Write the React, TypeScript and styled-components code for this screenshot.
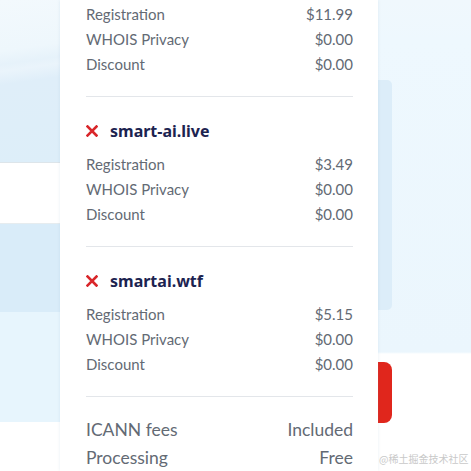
import React from 'react';
import styled, { createGlobalStyle } from 'styled-components';

const GlobalStyle = createGlobalStyle`
  html, body {
    margin: 0;
    padding: 0;
    width: 471px;
    height: 471px;
    overflow: hidden;
    background: #ffffff;
  }
  * {
    box-sizing: border-box;
  }
`;

interface Fee {
  label: string;
  price: string;
}

interface Domain {
  name: string;
  fees: Fee[];
}

const domains: Domain[] = [
  {
    name: 'smart-ai.live',
    fees: [
      { label: 'Registration', price: '$3.49' },
      { label: 'WHOIS Privacy', price: '$0.00' },
      { label: 'Discount', price: '$0.00' },
    ],
  },
  {
    name: 'smartai.wtf',
    fees: [
      { label: 'Registration', price: '$5.15' },
      { label: 'WHOIS Privacy', price: '$0.00' },
      { label: 'Discount', price: '$0.00' },
    ],
  },
];

const firstFees: Fee[] = [
  { label: 'Registration', price: '$11.99' },
  { label: 'WHOIS Privacy', price: '$0.00' },
  { label: 'Discount', price: '$0.00' },
];

const Page = styled.div`
  position: relative;
  display: flex;
  width: 471px;
  height: 471px;
  font-family: Lato, 'Noto Sans', sans-serif;
`;

const LeftStrip = styled.div`
  width: 60px;
  display: flex;
  flex-direction: column;
`;

const SkyBlock = styled.div`
  height: 162px;
  background: linear-gradient(
    172deg,
    #f3f9fd 0%,
    #eef7fc 30%,
    #e6f2fa 38%,
    #eaf4fb 42%,
    #dfeef9 50%,
    #ddeef9 100%
  );
`;

const InputBlock = styled.div`
  height: 62px;
  background: #ffffff;
  border-top: 1px solid #dde5ea;
  border-bottom: 1px solid #e6ecef;
`;

const BlueBlock = styled.div<{ $h: number; $bg: string }>`
  height: ${p => p.$h}px;
  background: ${p => p.$bg};
`;

const RightStrip = styled.div`
  flex: 1;
  display: flex;
  flex-direction: column;
  background: linear-gradient(
    180deg,
    #f0f8fd 0px,
    #eef8fe 40px,
    #ebf6fd 352px,
    #ffffff 354px
  );
`;

const Spacer = styled.div<{ $h: number }>`
  height: ${p => p.$h}px;
`;

const SideCard = styled.div`
  width: 14px;
  height: 230px;
  background: #dcedf9;
  border-radius: 0 5px 5px 0;
`;

const RedButton = styled.div`
  width: 14px;
  height: 61px;
  background: #e0261c;
  border-radius: 0 8px 8px 0;
`;

const Panel = styled.div`
  width: 318px;
  background: #ffffff;
  padding: 2px 25px 0 26px;
  box-shadow: 0 0 3px rgba(120, 160, 190, 0.18);
  z-index: 1;
`;

const Row = styled.div`
  display: flex;
  justify-content: space-between;
  height: 25px;
  line-height: 25px;
  font-size: 15px;
  color: #636a74;
`;

const Divider = styled.div`
  height: 1px;
  background: #e3e6ea;
  margin-top: 19px;
`;

const Title = styled.div`
  display: flex;
  align-items: center;
  gap: 12px;
  height: 24px;
  margin: 22px 0 9px;
  font-family: 'Noto Sans', sans-serif;
  font-size: 16px;
  font-weight: 700;
  color: #1c2350;
`;

const TotalRow = styled.div<{ $first?: boolean }>`
  display: flex;
  justify-content: space-between;
  height: 28px;
  line-height: 28px;
  font-size: 17.5px;
  color: #636a74;
  margin-top: ${p => (p.$first ? '19px' : '0')};
`;

const Watermark = styled.div`
  position: absolute;
  left: 379px;
  top: 451px;
  font-size: 10px;
  color: #c9c9c9;
  font-family: 'Noto Sans CJK SC', sans-serif;
  white-space: nowrap;
  z-index: 2;
`;

const Cross = () => (
  <svg width="12" height="12" viewBox="0 0 12 12">
    <path
      d="M1.5 1.5 L10.5 10.5 M10.5 1.5 L1.5 10.5"
      stroke="#d9262a"
      strokeWidth="2.6"
      strokeLinecap="square"
    />
  </svg>
);

const FeeRows = ({ fees }: { fees: Fee[] }) => (
  <>
    {fees.map(f => (
      <Row key={f.label}>
        <span>{f.label}</span>
        <span>{f.price}</span>
      </Row>
    ))}
  </>
);

export default function App() {
  return (
    <Page>
      <GlobalStyle />
      <LeftStrip>
        <SkyBlock />
        <InputBlock />
        <BlueBlock $h={88} $bg="#d9ecf9" />
        <BlueBlock $h={110} $bg="#e7f5fd" />
      </LeftStrip>

      <Panel>
        <FeeRows fees={firstFees} />
        <Divider />
        {domains.map(d => (
          <React.Fragment key={d.name}>
            <Title>
              <Cross />
              <span>{d.name}</span>
            </Title>
            <FeeRows fees={d.fees} />
            <Divider />
          </React.Fragment>
        ))}
        <TotalRow $first>
          <span>ICANN fees</span>
          <span>Included</span>
        </TotalRow>
        <TotalRow>
          <span>Processing</span>
          <span>Free</span>
        </TotalRow>
      </Panel>

      <RightStrip>
        <Spacer $h={80} />
        <SideCard />
        <Spacer $h={52} />
        <RedButton />
      </RightStrip>

      <Watermark>@稀土掘金技术社区</Watermark>
    </Page>
  );
}
